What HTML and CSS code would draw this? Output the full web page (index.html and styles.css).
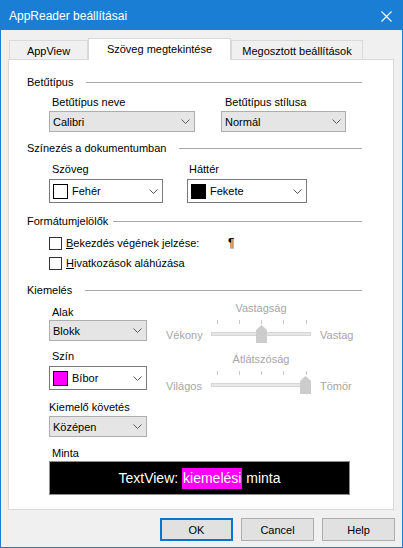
FILE: index.html
```html
<!DOCTYPE html>
<html lang="hu">
<head>
  <meta charset="UTF-8">
  <title>AppReader beállításai</title>
  <link rel="stylesheet" href="styles.css">
</head>
<body>
  <div class="window">

    <!-- Title bar -->
    <div class="titlebar">
      <span class="title">AppReader beállításai</span>
      <svg class="close" width="11" height="11" viewBox="0 0 11 11">
        <path d="M0.5 0.5 L10.5 10.5 M10.5 0.5 L0.5 10.5" stroke="#fff" stroke-width="1.1" fill="none"/>
      </svg>
    </div>

    <div class="client">
      <!-- Tabs -->
      <div class="tabs">
        <div class="tab tab-app">AppView</div>
        <div class="tab tab-active">Szöveg megtekintése</div>
        <div class="tab tab-shared">Megosztott beállítások</div>
      </div>

      <div class="panel">

        <!-- Betűtípus -->
        <div class="group-head"><span>Betűtípus</span><i></i></div>
        <div class="row row-font">
          <div class="field field-name">
            <div class="label">Betűtípus neve</div>
            <div class="combo"><span>Calibri</span><svg width="9" height="5"><polyline points="0.5,0.5 4.5,4.5 8.5,0.5" stroke="#5a5a5a" fill="none"/></svg></div>
          </div>
          <div class="field field-style">
            <div class="label">Betűtípus stílusa</div>
            <div class="combo"><span>Normál</span><svg width="9" height="5"><polyline points="0.5,0.5 4.5,4.5 8.5,0.5" stroke="#5a5a5a" fill="none"/></svg></div>
          </div>
        </div>

        <!-- Színezés -->
        <div class="group-head head-colors"><span>Színezés a dokumentumban</span><i></i></div>
        <div class="row row-colors">
          <div class="field field-text">
            <div class="label">Szöveg</div>
            <div class="combo color-combo"><b class="swatch swatch-white"></b><span>Fehér</span><svg width="9" height="5"><polyline points="0.5,0.5 4.5,4.5 8.5,0.5" stroke="#5a5a5a" fill="none"/></svg></div>
          </div>
          <div class="field field-bg">
            <div class="label">Háttér</div>
            <div class="combo color-combo"><b class="swatch swatch-black"></b><span>Fekete</span><svg width="9" height="5"><polyline points="0.5,0.5 4.5,4.5 8.5,0.5" stroke="#5a5a5a" fill="none"/></svg></div>
          </div>
        </div>

        <!-- Formátumjelölők -->
        <div class="group-head head-marks"><span>Formátumjelölők</span><i></i></div>
        <div class="check check-first">
          <b class="box"></b>
          <span class="check-text"><u>B</u>ekezdés végének jelzése:</span>
          <span class="pilcrow">¶</span>
        </div>
        <div class="check check-second">
          <b class="box"></b>
          <span class="check-text"><u>H</u>ivatkozások aláhúzása</span>
        </div>

        <!-- Kiemelés -->
        <div class="group-head head-highlight"><span>Kiemelés</span><i></i></div>
        <div class="hl-row hl-row-a">
          <div class="hl-field field-a">
            <div class="label">Alak</div>
            <div class="combo"><span>Blokk</span><svg width="9" height="5"><polyline points="0.5,0.5 4.5,4.5 8.5,0.5" stroke="#5a5a5a" fill="none"/></svg></div>
          </div>
          <div class="slider slider-a">
            <div class="s-title">Vastagság</div>
            <div class="s-min">Vékony</div>
            <div class="s-track">
              <b class="tick t1"></b><b class="tick t2"></b><b class="tick t3"></b><b class="tick t4"></b><b class="tick t5"></b>
              <b class="rail"></b>
              <svg class="thumb thumb-mid" width="11" height="18"><polygon points="0,5 5.5,0 11,5 11,18 0,18" fill="#cccccc"/></svg>
            </div>
            <div class="s-max">Vastag</div>
          </div>
        </div>

        <div class="hl-row hl-row-b">
          <div class="hl-field field-b">
            <div class="label">Szín</div>
            <div class="combo color-combo"><b class="swatch swatch-magenta"></b><span>Bíbor</span><svg width="9" height="5"><polyline points="0.5,0.5 4.5,4.5 8.5,0.5" stroke="#5a5a5a" fill="none"/></svg></div>
          </div>
          <div class="slider slider-b">
            <div class="s-title">Átlátszóság</div>
            <div class="s-min">Világos</div>
            <div class="s-track">
              <b class="tick t1"></b><b class="tick t2"></b><b class="tick t3"></b><b class="tick t4"></b><b class="tick t5"></b>
              <b class="rail"></b>
              <svg class="thumb thumb-end" width="11" height="18"><polygon points="0,5 5.5,0 11,5 11,18 0,18" fill="#cccccc"/></svg>
            </div>
            <div class="s-max">Tömör</div>
          </div>
        </div>

        <div class="hl-field field-follow">
          <div class="label label-flush">Kiemelő követés</div>
          <div class="combo"><span>Középen</span><svg width="9" height="5"><polyline points="0.5,0.5 4.5,4.5 8.5,0.5" stroke="#5a5a5a" fill="none"/></svg></div>
        </div>

        <div class="sample-block">
          <div class="label">Minta</div>
          <div class="sample">TextView: <span class="mark">kiemelési</span> minta</div>
        </div>
      </div>

      <!-- Dialog buttons -->
      <div class="buttons">
        <div class="btn btn-default">OK</div>
        <div class="btn">Cancel</div>
        <div class="btn">Help</div>
      </div>
    </div>
  </div>
</body>
</html>
```

FILE: styles.css
```css
* {
  margin: 0;
  padding: 0;
  box-sizing: border-box;
}

body {
  font-family: "Liberation Sans", Arial, sans-serif;
  font-size: 11px;
  color: #000;
  background: #fff;
}

/* window frame */
.window {
  width: 403px;
  height: 548px;
  border: 1px solid #1a7fd4;
  background: #f0f0f0;
  display: flex;
  flex-direction: column;
}

.titlebar {
  height: 29px;
  background: #1a7fd4;
  display: flex;
  align-items: center;
  justify-content: space-between;
  padding: 0 10px 0 8px;
  flex-shrink: 0;
}

.title {
  color: #fff;
  font-size: 12px;
  margin-top: 1px;
}

.close {
  margin-top: 1px;
}

.client {
  flex: 1;
  padding-top: 8px;
}

/* tabs */
.tabs {
  display: flex;
  align-items: flex-end;
  height: 21px;
  margin-left: 8px;
}

.tab {
  height: 19px;
  border: 1px solid #d9d9d9;
  border-bottom: none;
  background: #f0f0f0;
  display: flex;
  align-items: center;
  justify-content: center;
  padding-top: 1px;
  white-space: nowrap;
}

.tab-app { width: 79px; }
.tab-shared { width: 132px; }

.tab-active {
  width: 143px;
  height: 22px;
  margin-bottom: -1px;
  background: #fff;
  position: relative;
  z-index: 1;
  padding-top: 0;
  padding-bottom: 2px;
}

.panel {
  margin: 0 8px 0 7px;
  height: 451px;
  background: #fff;
  border: 1px solid #d9d9d9;
  padding: 15px 31px 0 18px;
}

/* group headings with etched line */
.group-head {
  display: flex;
  align-items: center;
  height: 14px;
  line-height: 14px;
}

.group-head i {
  flex: 1;
  height: 1px;
  background: #a8a8a8;
  margin-left: 13px;
}

.head-colors { margin-top: 9px; }
.head-marks { margin-top: 11px; }
.head-marks i { margin-left: 5px; }
.head-highlight { margin-top: 13px; }

.row {
  display: flex;
  margin-left: 22px;
}

.row-font { margin-top: 6px; gap: 26px; }
.row-colors { margin-top: 7px; gap: 24px; }

.label {
  height: 14px;
  line-height: 14px;
  padding-left: 3px;
  white-space: nowrap;
}

.label-flush { padding-left: 0; }

/* combo boxes */
.combo {
  height: 21px;
  margin-top: 2px;
  border: 1px solid #adadad;
  background: #e5e5e5;
  display: flex;
  align-items: center;
  padding: 0 4px 0 3px;
}

.combo span { flex: 1; }

.field-name { width: 146px; }
.field-style { width: 125px; }
.field-style .label { padding-left: 4px; }

.color-combo {
  height: 24px;
  margin-top: 3px;
  background: #fff;
  border-color: #7a7a7a;
}

.swatch {
  width: 15px;
  height: 15px;
  border: 1px solid #000;
  margin-right: 4px;
}

.swatch-white { background: #fff; }
.swatch-black { background: #000; }
.swatch-magenta { background: #ff00ff; }

.field-text { width: 114px; }
.field-bg { width: 120px; }
.field-bg .label { padding-left: 2px; }

/* check boxes */
.check {
  display: flex;
  align-items: center;
  height: 14px;
  margin-left: 22px;
}

.check-first { margin-top: 8px; }
.check-second { margin-top: 6px; }

.box {
  width: 13px;
  height: 13px;
  border: 1px solid #333;
  background: #fff;
  margin-right: 4px;
}

.check-text { width: 162px; }

.pilcrow { font-size: 12px; }

/* highlight section */
.hl-row {
  display: flex;
  align-items: flex-start;
  margin-left: 22px;
}

.hl-row-a { margin-top: 4px; }
.hl-row-a .hl-field { margin-top: 4px; }
.hl-row-a .combo { margin-top: 1px; }
.hl-row-b { margin-top: 5px; }
.hl-row-b .slider { margin-top: 3px; }

.hl-field { width: 98px; }

.field-follow {
  margin: 5px 0 0 22px;
}

/* disabled track bars */
.slider {
  display: grid;
  grid-template-columns: 45px 100px auto;
  margin-left: 19px;
  color: #a6a6a6;
}

.s-title {
  grid-column: 2;
  text-align: center;
  height: 14px;
  line-height: 14px;
  margin-bottom: 4px;
  white-space: nowrap;
}

.s-min {
  grid-column: 1;
  margin-top: 9px;
  line-height: 14px;
}

.s-max {
  margin: 9px 0 0 9px;
  line-height: 14px;
}

.s-track {
  position: relative;
  height: 25px;
}

.tick {
  position: absolute;
  top: 1px;
  width: 1px;
  height: 4px;
  background: #c8c8c8;
}

.t1 { left: 6px; }
.t2 { left: 28px; }
.t3 { left: 50px; }
.t4 { left: 72px; }
.t5 { left: 95px; }

.rail {
  position: absolute;
  left: 0;
  top: 13px;
  width: 100px;
  height: 4px;
  background: #e7e7e7;
  border: 1px solid #d6d6d6;
}

.thumb {
  position: absolute;
  top: 6px;
}

.thumb-mid { left: 45px; }
.thumb-end { left: 89px; }

/* sample preview */
.sample-block {
  margin: 9px 0 0 22px;
}

.sample {
  width: 301px;
  height: 34px;
  margin-top: 1px;
  background: #000;
  border: 1px solid #8c8c8c;
  color: #fff;
  font-size: 14px;
  display: flex;
  align-items: center;
  justify-content: center;
  white-space: pre;
}

.mark {
  background: #ff00ff;
  display: inline-block;
  line-height: 21px;
  padding: 0 1px;
}

/* dialog buttons */
.buttons {
  display: flex;
  justify-content: flex-end;
  gap: 8px;
  margin: 8px 7px 0 0;
}

.btn {
  width: 73px;
  height: 23px;
  border: 1px solid #adadad;
  background: #e1e1e1;
  display: flex;
  align-items: center;
  justify-content: center;
}

.btn-default {
  border: 2px solid #0a74d0;
}
```
